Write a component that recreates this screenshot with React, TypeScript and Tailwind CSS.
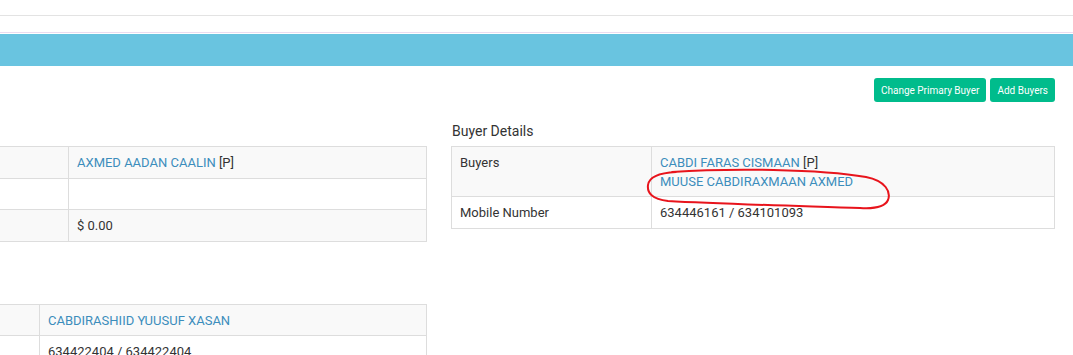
import React from "react";

const link = "text-[#3c8dbc]";

function Cell({ children, className = "" }: { children?: React.ReactNode; className?: string }) {
  return (
    <td className={`border border-[#dddddd] px-2 pt-[7px] pb-[5px] align-top leading-[1.42857] ${className}`}>
      {children}
    </td>
  );
}

function Title({ children }: { children: React.ReactNode }) {
  return <div className="text-[14px] leading-[20px] mb-[5px] pl-[1px] text-[#333]">{children}</div>;
}

export default function App() {
  return (
    <div className="w-[1073px] h-[355px] overflow-hidden bg-white font-['Roboto','Liberation_Sans',sans-serif] text-[13px] text-[#333]">
      <div className="h-[16px] border-b border-[#e3e3e3]" />
      <div className="h-[17px] border-b border-[#eadcf0]" />
      <div className="h-px" />
      <div className="h-8 bg-[#69c4e0]" />

      <div className="mt-[12px] flex justify-end gap-[4px] pr-[18px]">
        <button className="h-6 rounded-[3px] bg-[#00bc8c] px-[7px] text-[10px] text-white">
          Change Primary Buyer
        </button>
        <button className="h-6 rounded-[3px] bg-[#00bc8c] px-[7px] text-[10px] text-white">
          Add Buyers
        </button>
      </div>

      <div className="mt-[19px] ml-[-177px] flex gap-[24px]">
        <div className="w-[604px] shrink-0">
          <Title>Seller Details</Title>
          <table className="w-full table-fixed border-collapse">
            <colgroup>
              <col className="w-[245px]" />
              <col />
            </colgroup>
            <tbody>
              <tr className="bg-[#f9f9f9]">
                <Cell>Sellers</Cell>
                <Cell>
                  <span className={link}>AXMED AADAN CAALIN</span> [P]
                </Cell>
              </tr>
              <tr className="bg-white">
                <Cell>&nbsp;</Cell>
                <Cell>&nbsp;</Cell>
              </tr>
              <tr className="bg-[#f9f9f9]">
                <Cell>Amount</Cell>
                <Cell>$ 0.00</Cell>
              </tr>
            </tbody>
          </table>

          <div className="mt-[37px]">
            <Title>Witness Details</Title>
            <table className="w-full table-fixed border-collapse">
              <colgroup>
                <col className="w-[216px]" />
                <col />
              </colgroup>
              <tbody>
                <tr className="bg-[#f9f9f9]">
                  <Cell>Witness</Cell>
                  <Cell>
                    <span className={link}>CABDIRASHIID YUUSUF XASAN</span>
                  </Cell>
                </tr>
                <tr className="bg-white">
                  <Cell>Mobile Number</Cell>
                  <Cell>634422404 / 634422404</Cell>
                </tr>
              </tbody>
            </table>
          </div>
        </div>

        <div className="w-[604px] shrink-0">
          <Title>Buyer Details</Title>
          <div className="relative">
            <table className="w-full table-fixed border-collapse">
              <colgroup>
                <col className="w-[200px]" />
                <col />
              </colgroup>
              <tbody>
                <tr className="bg-[#f9f9f9]">
                  <Cell>Buyers</Cell>
                  <Cell>
                    <div>
                      <span className={link}>CABDI FARAS CISMAAN</span> [P]
                    </div>
                    <div className={link}>MUUSE CABDIRAXMAAN AXMED</div>
                  </Cell>
                </tr>
                <tr className="bg-white">
                  <Cell>Mobile Number</Cell>
                  <Cell>634446161 / 634101093</Cell>
                </tr>
              </tbody>
            </table>
            <svg
              className="pointer-events-none absolute left-0 top-0"
              width="604"
              height="90"
              viewBox="451 146 604 90"
              fill="none"
            >
              <path
                d="M 672 172 C 730 168, 820 169, 866 177 C 886 181, 891 192, 888 200 C 885 207, 876 209, 860 208 C 800 206, 720 204, 668 201 C 652 199, 647 193, 648 185 C 649 178, 656 173, 676 172"
                stroke="#e8141c"
                strokeWidth="2"
                strokeLinecap="round"
              />
            </svg>
          </div>
        </div>
      </div>
    </div>
  );
}
